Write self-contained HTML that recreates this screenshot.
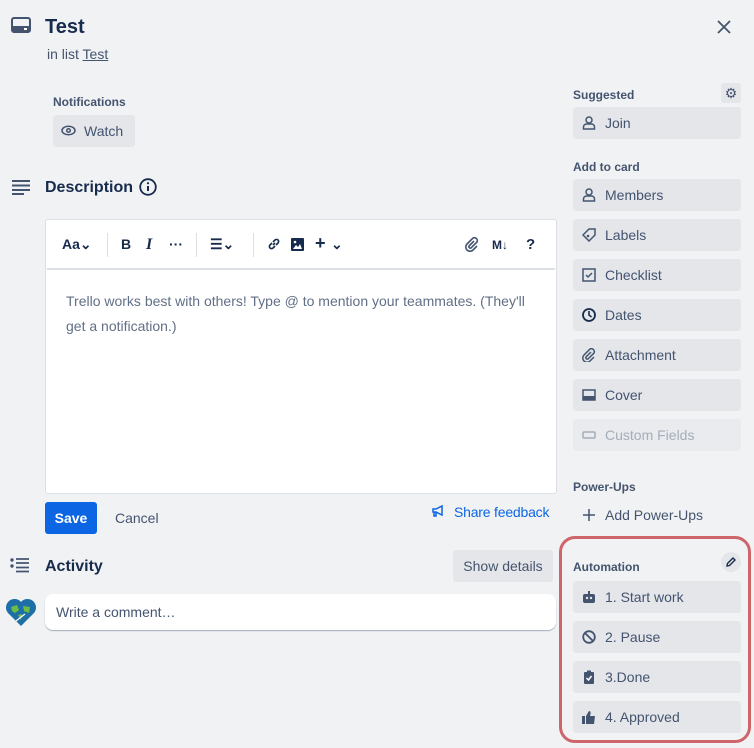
<!DOCTYPE html>
<html><head><style>
*{box-sizing:border-box;margin:0;padding:0}
body{width:754px;height:748px;background:#f1f2f4;font-family:"Liberation Sans",sans-serif;color:#172b4d;position:relative;overflow:hidden}
.a{position:absolute}
.btn{position:absolute;left:573px;width:168px;height:32px;background:#e4e6ea;border-radius:3px;font-size:14px;color:#44546f;line-height:32px;padding-left:32px}
.btn svg{position:absolute;left:9px;top:9px}
.lbl{position:absolute;left:573px;font-size:12px;font-weight:bold;color:#44546f}
.tb{position:absolute;top:236px;font-size:14px;font-weight:bold;color:#172b4d}
</style></head><body>
<svg class="a" style="left:11px;top:17px" width="20" height="16" viewBox="0 0 20 16"><rect x="1" y="1" width="18" height="14" rx="2" fill="none" stroke="#44546f" stroke-width="2"/><rect x="1" y="9" width="18" height="6" fill="#44546f"/><rect x="13" y="11" width="3" height="2" fill="#fff"/></svg>
<div class="a" style="left:45px;top:16px;font-size:20px;font-weight:bold">Test</div>
<div class="a" style="left:47px;top:46px;font-size:14px;color:#44546f">in list <u>Test</u></div>
<svg class="a" style="left:716px;top:19px" width="16" height="16" viewBox="0 0 16 16"><path d="M2 2L14 14M14 2L2 14" stroke="#44546f" stroke-width="1.8"/></svg>
<div class="a" style="left:53px;top:95px;font-size:12px;font-weight:bold;color:#44546f">Notifications</div>
<div class="a" style="left:53px;top:115px;width:82px;height:32px;background:#e4e6ea;border-radius:3px;font-size:14px;color:#44546f;line-height:32px;padding-left:31px">Watch</div>
<svg class="a" style="left:61px;top:125px" width="15" height="11" viewBox="0 0 15 11"><ellipse cx="7.5" cy="5.5" rx="6.5" ry="4.3" fill="none" stroke="#44546f" stroke-width="1.5"/><circle cx="7.5" cy="5.5" r="1.8" fill="none" stroke="#44546f" stroke-width="1.5"/></svg>
<svg class="a" style="left:12px;top:180px" width="18" height="15" viewBox="0 0 18 15"><path d="M0 1H18M0 5.5H18M0 10H18M0 14H12" stroke="#44546f" stroke-width="2"/></svg>
<div class="a" style="left:45px;top:179px;font-size:16px;font-weight:bold;color:#172b4d">Description</div>
<svg class="a" style="left:139px;top:178px" width="18" height="18" viewBox="0 0 18 18"><circle cx="9" cy="9" r="7.8" fill="none" stroke="#172b4d" stroke-width="1.8"/><path d="M9 8V13" stroke="#172b4d" stroke-width="2"/><circle cx="9" cy="5.2" r="1.1" fill="#172b4d"/></svg>
<div class="a" style="left:45px;top:219px;width:512px;height:275px;background:#fff;border:1px solid #dcdfe4;border-radius:3px"></div>
<div class="a" style="left:47px;top:268px;width:508px;height:2px;background:#dcdfe4"></div>
<div class="tb" style="left:62px">Aa⌄</div>
<div class="a" style="left:107px;top:233px;width:1px;height:24px;background:#dcdfe4"></div>
<div class="tb" style="left:121px">B</div>
<div class="tb" style="left:146px;font-style:italic;font-family:'Liberation Serif',serif;font-size:16px">I</div>
<div class="tb" style="left:169px">···</div>
<div class="a" style="left:196px;top:233px;width:1px;height:24px;background:#dcdfe4"></div>
<div class="tb" style="left:210px">☰⌄</div>
<div class="a" style="left:253px;top:233px;width:1px;height:24px;background:#dcdfe4"></div>
<svg class="a" style="left:267px;top:237px" width="14" height="14" viewBox="0 0 14 14"><path d="M6 8L8 6M5 6L3 8a2 2 0 003 3l2-2M9 8l2-2a2 2 0 00-3-3L6 5" fill="none" stroke="#172b4d" stroke-width="1.6"/></svg>
<svg class="a" style="left:291px;top:238px" width="13" height="13" viewBox="0 0 13 13"><rect width="13" height="13" rx="1" fill="#172b4d"/><path d="M2 11L5 7L7 9L9 6L11 11Z" fill="#fff"/><circle cx="4" cy="4" r="1.3" fill="#fff"/></svg>
<div class="tb" style="left:315px;top:233px;font-size:18px">+</div><div class="tb" style="left:331px">⌄</div>
<svg class="a" style="left:464px;top:236px" width="16" height="16" viewBox="0 0 16 16"><path d="M10 5L5 10a1.5 1.5 0 002 2l6-6a3 3 0 00-4-4L3 8a4 4 0 006 6l4-4" fill="none" stroke="#44546f" stroke-width="1.6"/></svg>
<div class="tb" style="left:492px;font-size:12px;top:238px">M↓</div>
<div class="tb" style="left:526px;font-size:15px">?</div>
<div class="a" style="left:66px;top:289px;font-size:14px;color:#626f86;line-height:25px;width:470px">Trello works best with others! Type @ to mention your teammates. (They'll get a notification.)</div>
<div class="a" style="left:45px;top:502px;width:52px;height:32px;background:#0c66e4;border-radius:3px;color:#fff;font-size:14px;font-weight:bold;line-height:32px;text-align:center">Save</div>
<div class="a" style="left:115px;top:510px;font-size:14px;color:#44546f">Cancel</div>
<svg class="a" style="left:432px;top:505px" width="12" height="12" viewBox="0 0 12 12"><path d="M1 4H4L10 1V10L4 7H1Z M2 7V11H4V7" fill="none" stroke="#0c66e4" stroke-width="1.5"/></svg>
<div class="a" style="left:454px;top:504px;font-size:14px;color:#0c66e4;letter-spacing:-0.2px">Share feedback</div>
<svg class="a" style="left:10px;top:558px" width="20" height="15" viewBox="0 0 20 15"><circle cx="2" cy="2" r="1.7" fill="#44546f"/><circle cx="2" cy="8" r="1.7" fill="#44546f"/><path d="M6 1H19M6 5H19M6 9.5H19M6 13.5H19" stroke="#44546f" stroke-width="1.8"/></svg>
<div class="a" style="left:45px;top:558px;font-size:16px;font-weight:bold">Activity</div>
<div class="a" style="left:453px;top:550px;width:100px;height:32px;background:#e4e6ea;border-radius:3px;font-size:14px;color:#44546f;line-height:32px;text-align:center">Show details</div>
<svg class="a" style="left:5px;top:597px" width="32" height="30" viewBox="0 0 32 30"><path d="M16 29L3 16A8 8 0 0116 5A8 8 0 0129 16Z" fill="#1d6fa5"/><path d="M6 10L12 8L14 13L10 16L7 14Z M18 9L25 10L24 16L19 14Z M13 18L17 17L16 23Z" fill="#6bbd45"/><path d="M11 24L20 17" stroke="#fff" stroke-width="1.3"/></svg>
<div class="a" style="left:45px;top:594px;width:511px;height:36px;background:#fff;border-radius:8px;box-shadow:0 1px 1px #a5adba;font-size:14px;color:#44546f;line-height:36px;padding-left:11px">Write a comment…</div>

<div class="lbl" style="top:88px">Suggested</div>
<div class="a" style="left:721px;top:83px;width:20px;height:20px;background:#e4e6ea;border-radius:3px;color:#44546f;font-size:14px;text-align:center;line-height:20px">⚙</div>
<div class="btn" style="top:107px"><svg width="14" height="14" viewBox="0 0 14 14"><circle cx="7" cy="4" r="3" fill="none" stroke="#44546f" stroke-width="1.5"/><path d="M1.5 13V11a3 3 0 013-3h5a3 3 0 013 3v2Z" fill="none" stroke="#44546f" stroke-width="1.5"/></svg>Join</div>
<div class="lbl" style="top:160px">Add to card</div>
<div class="btn" style="top:179px"><svg width="14" height="14" viewBox="0 0 14 14"><circle cx="7" cy="4" r="3" fill="none" stroke="#44546f" stroke-width="1.5"/><path d="M1.5 13V11a3 3 0 013-3h5a3 3 0 013 3v2Z" fill="none" stroke="#44546f" stroke-width="1.5"/></svg>Members</div>
<div class="btn" style="top:219px"><svg width="14" height="14" viewBox="0 0 14 14"><path d="M7 1H13V7L7 13L1 7Z" fill="none" stroke="#44546f" stroke-width="1.5"/><circle cx="6" cy="8" r="1.3" fill="#44546f"/></svg>Labels</div>
<div class="btn" style="top:259px"><svg width="14" height="14" viewBox="0 0 14 14"><rect x="1" y="1" width="12" height="12" fill="none" stroke="#44546f" stroke-width="1.5"/><path d="M4 7L6 9L10 5" fill="none" stroke="#44546f" stroke-width="1.5"/></svg>Checklist</div>
<div class="btn" style="top:299px"><svg width="14" height="14" viewBox="0 0 14 14"><circle cx="7" cy="7" r="6" fill="none" stroke="#172b4d" stroke-width="1.8"/><path d="M7 3V7L9.5 9" fill="none" stroke="#172b4d" stroke-width="1.6"/></svg>Dates</div>
<div class="btn" style="top:339px"><svg width="14" height="14" viewBox="0 0 14 14"><path d="M9 4L4 9a1.5 1.5 0 002 2l6-6a3 3 0 00-4-4L2 7a4 4 0 006 6l4-4" fill="none" stroke="#44546f" stroke-width="1.5"/></svg>Attachment</div>
<div class="btn" style="top:379px"><svg width="14" height="14" viewBox="0 0 14 14"><rect x="1" y="2" width="12" height="10" fill="none" stroke="#44546f" stroke-width="1.5"/><rect x="1" y="8" width="12" height="4" fill="#44546f"/></svg>Cover</div>
<div class="btn" style="top:419px;color:#a5adba;background:#e9ebee"><svg width="14" height="14" viewBox="0 0 14 14"><rect x="1" y="4" width="12" height="6" rx="1" fill="none" stroke="#a5adba" stroke-width="1.5"/></svg>Custom Fields</div>
<div class="lbl" style="top:480px">Power-Ups</div>
<div class="btn" style="top:499px;background:none;padding-left:32px"><svg width="14" height="14" viewBox="0 0 14 14"><path d="M7 1V13M1 7H13" stroke="#44546f" stroke-width="1.5"/></svg>Add Power-Ups</div>
<div class="a" style="left:559px;top:536px;width:192px;height:207px;border:3px solid #c0353d;border-radius:16px;opacity:.75"></div>
<div class="lbl" style="top:560px">Automation</div>
<div class="a" style="left:721px;top:552px;width:20px;height:20px;background:#e4e6ea;border-radius:50%"></div>
<svg class="a" style="left:725px;top:556px" width="12" height="12" viewBox="0 0 12 12"><path d="M2 10L2.5 7.5L8 2L10 4L4.5 9.5Z" fill="none" stroke="#172b4d" stroke-width="1.4"/></svg>
<div class="btn" style="top:581px"><svg width="14" height="14" viewBox="0 0 14 14"><rect x="1" y="4" width="12" height="9" rx="2" fill="#44546f"/><rect x="6" y="1" width="2" height="3" fill="#44546f"/><circle cx="5" cy="8" r="1.2" fill="#e4e6ea"/><circle cx="9" cy="8" r="1.2" fill="#e4e6ea"/></svg>1. Start work</div>
<div class="btn" style="top:621px"><svg width="14" height="14" viewBox="0 0 14 14"><circle cx="7" cy="7" r="5.8" fill="none" stroke="#44546f" stroke-width="1.8"/><path d="M3 3L11 11" stroke="#44546f" stroke-width="1.8"/></svg>2. Pause</div>
<div class="btn" style="top:661px"><svg width="14" height="14" viewBox="0 0 14 14"><rect x="2" y="2" width="10" height="12" rx="1" fill="#44546f"/><rect x="5" y="0.5" width="4" height="3" fill="#44546f"/><path d="M4.5 8L6.5 10L9.5 6" fill="none" stroke="#fff" stroke-width="1.5"/></svg>3.Done</div>
<div class="btn" style="top:701px"><svg width="14" height="14" viewBox="0 0 14 14"><rect x="0" y="6" width="3" height="8" fill="#44546f"/><path d="M4 6L7 1Q9 1 8.5 4L8 6H13L12 14H4Z" fill="#44546f"/></svg>4. Approved</div>
</body></html>
